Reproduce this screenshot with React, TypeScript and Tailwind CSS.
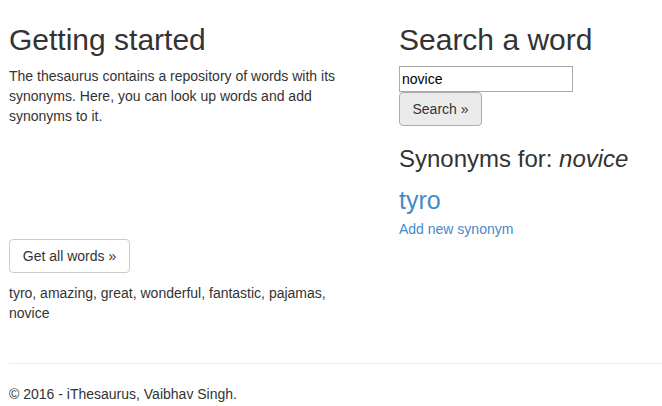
export default function App() {
  return (
    <div className="min-h-screen bg-white pl-[9px] pt-[23px] font-['Liberation_Sans',Arial,sans-serif] text-[14px] leading-[20px] text-[#333]">
      <div className="flex">
        <div className="w-[390px] pr-[30px]">
          <h2 className="text-[30px] leading-[33px] font-normal">Getting started</h2>
          <p className="mt-[10px]">
            The thesaurus contains a repository of words with its synonyms. Here, you can look up words and add synonyms to it.
          </p>
          <button className="mt-[113px] h-[34px] w-[121px] rounded-[4px] border border-[#ccc] bg-white text-[14px] text-[#333]">
            Get all words »
          </button>
          <p className="mt-[10px]">tyro, amazing, great, wonderful, fantastic, pajamas, novice</p>
        </div>
        <div className="flex-1">
          <h2 className="text-[30px] leading-[33px] font-normal">Search a word</h2>
          <input
            className="mt-[10px] block h-[26px] w-[174px] border border-[#a9a9a9] px-[2px] text-[14px] text-black outline-none"
            defaultValue="novice"
          />
          <button className="block h-[34px] w-[83px] rounded-[4px] border border-[#adadad] bg-[#ebebeb] text-[14px] text-[#333]">
            Search »
          </button>
          <h3 className="mt-[20px] text-[24px] leading-[26.4px] font-normal">
            Synonyms for: <em>novice</em>
          </h3>
          <div className="mt-[15px] text-[25px] leading-[26.4px]">
            <a className="text-[#428bca]" href="#">tyro</a>
          </div>
          <div className="mt-[5px]">
            <a className="text-[#428bca]" href="#">Add new synonym</a>
          </div>
        </div>
      </div>
      <hr className="mt-[40px] border-t border-[#eee]" />
      <footer className="mt-[20px]">
        <p>© 2016 - iThesaurus, Vaibhav Singh.</p>
      </footer>
    </div>
  );
}
